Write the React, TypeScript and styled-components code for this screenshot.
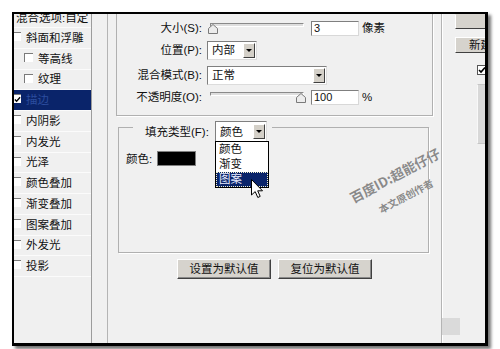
import React from "react";
import styled, { createGlobalStyle } from "styled-components";

const GlobalStyle = createGlobalStyle`
  html, body { margin: 0; padding: 0; background: #fff; }
  body {
    font-family: "Liberation Sans", "Noto Sans CJK SC", sans-serif;
    font-size: 11.5px;
    color: #111;
  }
  * { box-sizing: border-box; }
`;

const Page = styled.div`
  width: 500px;
  height: 349px;
  overflow: hidden;
  padding: 12px 0 0 12px;
`;

const Frame = styled.div`
  position: relative;
  display: flex;
  width: 476px;
  height: 334px;
  border-style: solid;
  border-color: #000;
  border-width: 2px 3px 3px 2px;
  background: #f0f0f0;
  box-shadow: 3px 3px 3px rgba(0, 0, 0, 0.55);
  overflow: hidden;
`;

/* ---------- left style list ---------- */
const StyleList = styled.ul`
  list-style: none;
  margin: 0;
  padding: 0;
  flex: none;
  width: 78px;
  border-right: 1px solid #9c9c9c;
  display: flex;
  flex-direction: column;
`;

const StyleItem = styled.li<{ $selected?: boolean; $indent?: boolean }>`
  display: flex;
  align-items: center;
  flex: none;
  height: 20.75px;
  padding-left: ${(p) => (p.$indent ? 12 : 0)}px;
  border-bottom: 1px solid #fbfbfb;
  background: ${(p) => (p.$selected ? "#0a246a" : "transparent")};
  color: ${(p) => (p.$selected ? "#2c4d9e" : "#111")};
  white-space: nowrap;
  line-height: 14px;
`;

const HeadItem = styled.li`
  flex: none;
  height: 14px;
  display: flex;
  align-items: flex-end;
  overflow: hidden;
  padding-left: 2px;
  border-bottom: 1px solid #fbfbfb;
  white-space: nowrap;
  span {
    line-height: 14px;
    margin-bottom: 2px;
  }
`;

const ItemCheck = styled.span`
  flex: none;
  align-self: flex-start;
  width: 9px;
  height: 9px;
  margin: 4px 5px 0 -2px;
  background: #fff;
  border-top: 1px solid #7a7a7a;
  border-left: 1px solid #7a7a7a;
  display: flex;
  align-items: center;
  justify-content: center;
`;

/* ---------- main panel ---------- */
const MainPanel = styled.div`
  flex: none;
  width: 334px;
  margin-left: 15px;
  border-left: 1px solid #b4b4b4;
  display: flex;
  flex-direction: column;
`;

const StrokeGroup = styled.div`
  flex: none;
  width: 317px;
  margin-left: 8px;
  border: 1px solid #b0b0b0;
  border-top: none;
  box-shadow: 1px 1px 0 #fff;
  padding: 3px 0 7px 0;
  display: flex;
  flex-direction: column;
`;

const ControlRow = styled.div<{ $gap?: number }>`
  display: flex;
  align-items: center;
  height: 22px;
  margin-top: ${(p) => p.$gap ?? 0}px;
  white-space: nowrap;
`;

const FieldLabel = styled.span`
  flex: none;
  width: 85px;
  margin-right: 5px;
  text-align: right;
  line-height: 14px;
`;

const Slider = styled.div`
  position: relative;
  flex: none;
  width: 98px;
  height: 22px;
`;

const Track = styled.div`
  position: absolute;
  left: 3px;
  right: 1px;
  top: 6px;
  height: 4px;
  background: #dedede;
  border-top: 1px solid #8a8a8a;
  border-left: 1px solid #8a8a8a;
  border-bottom: 1px solid #fff;
  border-right: 1px solid #fff;
`;

const Thumb = styled.svg<{ $at: number }>`
  position: absolute;
  top: 7px;
  left: ${(p) => p.$at}px;
`;

const NumberBox = styled.div`
  flex: none;
  width: 48px;
  height: 15px;
  margin-left: 6px;
  background: #fff;
  border: 1px solid;
  border-color: #7f7f7f #d8d8d8 #d8d8d8 #7f7f7f;
  padding-left: 2px;
  font-size: 11px;
  line-height: 13px;
`;

const Unit = styled.span`
  margin-left: 3px;
  line-height: 14px;
`;

const Select = styled.div<{ $w: number; $h?: number }>`
  position: relative;
  flex: none;
  width: ${(p) => p.$w}px;
  height: ${(p) => p.$h ?? 19}px;
  background: #fff;
  border: 1px solid;
  border-color: #7f7f7f #dcdcdc #dcdcdc #7f7f7f;
  display: flex;
  align-items: center;
  padding-left: 4px;
  line-height: 14px;
`;

const DropButton = styled.span`
  margin-left: auto;
  margin-right: 1px;
  width: 12px;
  height: 15px;
  background: #d4d0c8;
  border: 1px solid;
  border-color: #fff #404040 #404040 #fff;
  display: flex;
  align-items: center;
  justify-content: center;
  &::after {
    content: "";
    border-left: 3px solid transparent;
    border-right: 3px solid transparent;
    border-top: 3px solid #000;
  }
`;

const FillGroup = styled.div`
  position: relative;
  flex: none;
  width: 311px;
  height: 126px;
  margin: 11px 0 0 10px;
  border: 1px solid #b0b0b0;
  box-shadow: 1px 1px 0 #fff;
  padding: 23px 0 0 7px;
`;

const Legend = styled.div`
  position: absolute;
  left: 14px;
  top: -7px;
  height: 21px;
  padding: 0 5px 0 12px;
  background: #f0f0f0;
  display: flex;
  align-items: center;
  white-space: nowrap;
`;

const LegendLabel = styled.span`
  width: 70px;
  line-height: 14px;
`;

const DropList = styled.ul`
  position: absolute;
  left: -1px;
  top: 100%;
  width: 54px;
  margin: 0;
  padding: 0;
  list-style: none;
  background: #fff;
  border: 1px solid #000;
  z-index: 2;
`;

const DropItem = styled.li<{ $active?: boolean }>`
  height: 15px;
  line-height: 13px;
  padding-left: 2px;
  border: 1px ${(p) => (p.$active ? "dotted #f2f0c8" : "solid transparent")};
  background: ${(p) => (p.$active ? "#0a246a" : "transparent")};
  color: ${(p) => (p.$active ? "#e8ecff" : "#111")};
`;

const Cursor = styled.svg`
  position: absolute;
  left: 35px;
  top: 37px;
`;

const ColorRow = styled.div`
  display: flex;
  align-items: center;
  height: 15px;
`;

const ColorLabel = styled.span`
  width: 31px;
  line-height: 14px;
`;

const Swatch = styled.span`
  width: 39px;
  height: 15px;
  background: #000;
  border: 1px solid #808080;
`;

const ButtonRow = styled.div`
  display: flex;
  justify-content: center;
  gap: 7px;
  margin-top: 6px;
`;

const Button = styled.div<{ $w?: number; $h?: number }>`
  width: ${(p) => p.$w ?? 94}px;
  height: ${(p) => p.$h ?? 20}px;
  background: #d6d3cd;
  border: 1px solid;
  border-color: #fff #404040 #404040 #fff;
  box-shadow: inset -1px -1px 0 #8a8a8a;
  display: flex;
  align-items: center;
  justify-content: center;
  line-height: 14px;
  white-space: nowrap;
`;

/* ---------- right column ---------- */
const SideColumn = styled.div`
  flex: 1;
  border-left: 1px solid #b4b4b4;
  box-shadow: inset 1px 0 0 #fff;
  padding-left: 13px;
  display: flex;
  flex-direction: column;
  overflow: hidden;
`;

const SideButton = styled.div<{ $clipped?: boolean; $gap?: number }>`
  flex: none;
  width: 42px;
  height: ${(p) => (p.$clipped ? 15 : 16)}px;
  margin-top: ${(p) => p.$gap ?? 0}px;
  background: #d6d3cd;
  border: 1px solid;
  border-color: ${(p) => (p.$clipped ? "transparent" : "#fff")} #404040 #404040 #fff;
  padding-left: 13px;
  display: flex;
  align-items: center;
  line-height: 14px;
  white-space: nowrap;
`;

const SideCheck = styled.span`
  flex: none;
  width: 10px;
  height: 10px;
  margin: 12px 0 0 22px;
  background: #fff;
  border: 1px solid #555;
  display: flex;
  align-items: center;
  justify-content: center;
`;

const Preview = styled.div`
  flex: none;
  width: 20px;
  height: 60px;
  margin: 9px 0 0 22px;
  background: #d8d8d8;
  border: 1px solid #c6c6c6;
  border-left-color: #f8f8f8;
`;

const Grip = styled.div`
  flex: none;
  margin: auto 0 8px -15px;
  width: 20px;
  height: 17px;
  background: #dadada;
`;

/* ---------- watermark ---------- */
const Watermark = styled.div`
  position: absolute;
  left: 386px;
  top: 171px;
  transform: translate(-50%, -50%) rotate(-28deg);
  display: flex;
  flex-direction: column;
  align-items: center;
  color: #8a8a8a;
  font-family: "Noto Sans CJK SC", sans-serif;
  font-weight: 700;
  white-space: nowrap;
  text-shadow: 0 0 1px #fff;
  pointer-events: none;
`;

const MarkLine = styled.span<{ $size: number; $lh: number; $gap?: number }>`
  font-size: ${(p) => p.$size}px;
  line-height: ${(p) => p.$lh}px;
  margin-top: ${(p) => p.$gap ?? 0}px;
`;

const CheckMark = ({ size = 8 }: { size?: number }) => (
  <svg width={size} height={size} viewBox="0 0 8 8">
    <path d="M1 4 L3 6 L7 1.5" fill="none" stroke="#000" strokeWidth="1.6" />
  </svg>
);

const ThumbIcon = ({ at }: { at: number }) => (
  <Thumb $at={at} width="10" height="10" viewBox="0 0 10 10">
    <path
      d="M0.5 4.5 L5 0.5 L9.5 4.5 L9.5 9.5 L0.5 9.5 Z"
      fill="#ececec"
      stroke="#7a7a7a"
    />
  </Thumb>
);

const styles: { label: string; indent?: boolean; selected?: boolean }[] = [
  { label: "斜面和浮雕" },
  { label: "等高线", indent: true },
  { label: "纹理", indent: true },
  { label: "描边", selected: true },
  { label: "内阴影" },
  { label: "内发光" },
  { label: "光泽" },
  { label: "颜色叠加" },
  { label: "渐变叠加" },
  { label: "图案叠加" },
  { label: "外发光" },
  { label: "投影" },
];

export default function App() {
  return (
    <>
      <GlobalStyle />
      <Page>
        <Frame>
          <StyleList>
            <HeadItem>
              <span>混合选项:自定</span>
            </HeadItem>
            {styles.map((s) => (
              <StyleItem key={s.label} $indent={s.indent} $selected={s.selected}>
                <ItemCheck>{s.selected && <CheckMark size={7} />}</ItemCheck>
                {s.label}
              </StyleItem>
            ))}
          </StyleList>

          <MainPanel>
            <StrokeGroup>
              <ControlRow>
                <FieldLabel>大小(S):</FieldLabel>
                <Slider>
                  <Track />
                  <ThumbIcon at={1} />
                </Slider>
                <NumberBox>3</NumberBox>
                <Unit>像素</Unit>
              </ControlRow>
              <ControlRow>
                <FieldLabel>位置(P):</FieldLabel>
                <Select $w={50}>
                  内部
                  <DropButton />
                </Select>
              </ControlRow>
              <ControlRow $gap={3}>
                <FieldLabel>混合模式(B):</FieldLabel>
                <Select $w={120}>
                  正常
                  <DropButton />
                </Select>
              </ControlRow>
              <ControlRow>
                <FieldLabel>不透明度(O):</FieldLabel>
                <Slider>
                  <Track />
                  <ThumbIcon at={89} />
                </Slider>
                <NumberBox>100</NumberBox>
                <Unit>%</Unit>
              </ControlRow>
            </StrokeGroup>

            <FillGroup>
              <Legend>
                <LegendLabel>填充类型(F):</LegendLabel>
                <Select $w={52} $h={21}>
                  颜色
                  <DropButton />
                  <DropList>
                    <DropItem>颜色</DropItem>
                    <DropItem>渐变</DropItem>
                    <DropItem $active>图案</DropItem>
                    <Cursor width="13" height="20" viewBox="0 0 13 20">
                      <path
                        d="M0.5 0.5 L0.5 16 L4.2 12.6 L6.8 18.5 L9.2 17.4 L6.7 11.8 L11.5 11.8 Z"
                        fill="#fff"
                        stroke="#000"
                        strokeWidth="1"
                        strokeLinejoin="round"
                      />
                    </Cursor>
                  </DropList>
                </Select>
              </Legend>
              <ColorRow>
                <ColorLabel>颜色:</ColorLabel>
                <Swatch />
              </ColorRow>
            </FillGroup>

            <ButtonRow>
              <Button>设置为默认值</Button>
              <Button>复位为默认值</Button>
            </ButtonRow>
          </MainPanel>

          <SideColumn>
            <SideButton $clipped />
            <SideButton $gap={8}>新建</SideButton>
            <SideCheck>
              <CheckMark />
            </SideCheck>
            <Preview />
            <Grip />
          </SideColumn>

          <Watermark>
            <MarkLine $size={13.5} $lh={15}>百度ID:超能仔仔</MarkLine>
            <MarkLine $size={10} $lh={12} $gap={10}>本文原创作者</MarkLine>
          </Watermark>
        </Frame>
      </Page>
    </>
  );
}
